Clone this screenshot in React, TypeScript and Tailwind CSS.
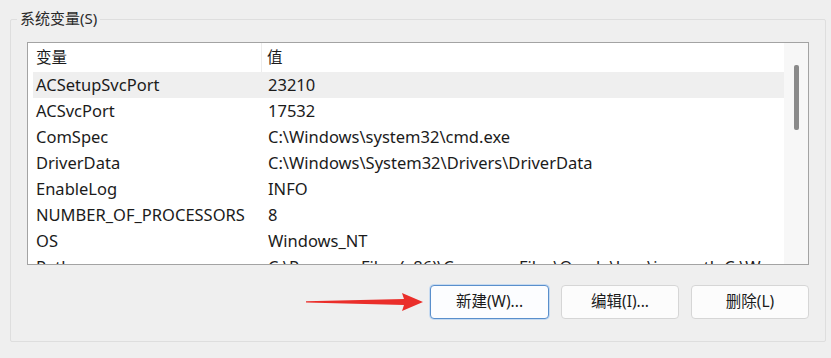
import React from 'react';

const rows: [string, string][] = [
  ['ACSetupSvcPort', '23210'],
  ['ACSvcPort', '17532'],
  ['ComSpec', 'C:\\Windows\\system32\\cmd.exe'],
  ['DriverData', 'C:\\Windows\\System32\\Drivers\\DriverData'],
  ['EnableLog', 'INFO'],
  ['NUMBER_OF_PROCESSORS', '8'],
  ['OS', 'Windows_NT'],
  ['Path', 'C:\\Program Files (x86)\\Common Files\\Oracle\\Java\\javapath;C:\\W'],
];

const font = { fontFamily: '"Noto Sans", "Noto Sans CJK SC", sans-serif' };

function Arrow() {
  return (
    <svg width="118" height="22" viewBox="0 0 118 22" className="mr-[4px] mt-[6px]">
      <path d="M0 10.2 L98 8 L96 2 L117 11 L96 20 L98 14 L0 11.4 Z" fill="#ea2e2a" />
    </svg>
  );
}

function Button({ label, primary }: { label: string; primary?: boolean }) {
  return (
    <button
      className={
        primary
          ? 'h-[34px] w-[119px] rounded-[4px] border border-[#5a8fcc] bg-[#fcfdff] text-[15.5px] text-[#1b1b1b] shadow-[0_0_0_1px_#c6daf0]'
          : 'h-[34px] w-[118px] rounded-[4px] border border-[#d6d6d6] bg-[#fcfcfc] text-[15.5px] text-[#1b1b1b]'
      }
    >
      {label}
    </button>
  );
}

export default function App() {
  return (
    <div className="w-[831px] h-[358px] bg-[#efefef] pt-[19px] pl-[10px] overflow-hidden" style={font}>
      <div className="relative w-[816px] h-[323px] border border-[#dedede] rounded-[2px] pt-[22px] pl-[16px]">
        <div className="absolute -top-[12px] left-[6px] bg-[#efefef] px-[3px] text-[15px] leading-[21px] text-[#2a2a2a]">
          系统变量(S)
        </div>

        <div className="flex w-[782px] h-[223px] border border-[#a3a3a3] bg-white overflow-hidden">
          <div className="flex-1 flex flex-col">
            <div className="flex h-[29px] shrink-0 items-center text-[15.5px] text-[#1b1b1b]">
              <div className="w-[234px] h-full pl-[8px] flex items-center border-r border-[#ececec]">变量</div>
              <div className="pl-[5px]">值</div>
            </div>
            {rows.map(([k, v], i) => (
              <div
                key={k}
                className={`flex shrink-0 h-[26px] items-center ml-[5px] text-[16.5px] text-[#1b1b1b] whitespace-nowrap ${
                  i === 0 ? 'bg-[#efefef]' : ''
                }`}
              >
                <div className="w-[235px] pl-[3px]">{k}</div>
                <div>{v}</div>
              </div>
            ))}
          </div>
          <div className="w-[24px] h-full bg-[#f7f7f7] pt-[22px] pl-[10px]">
            <div className="w-[5px] h-[65px] rounded-[2px] bg-[#8a8a8a]" />
          </div>
        </div>

        <div className="flex justify-end items-start w-[782px] mt-[20px] gap-[12px]">
          <div className="flex items-start -mr-[12px]">
            <Arrow />
            <div className="w-[2px]" />
          </div>
          <Button label="新建(W)..." primary />
          <Button label="编辑(I)..." />
          <Button label="删除(L)" />
        </div>
      </div>
    </div>
  );
}
